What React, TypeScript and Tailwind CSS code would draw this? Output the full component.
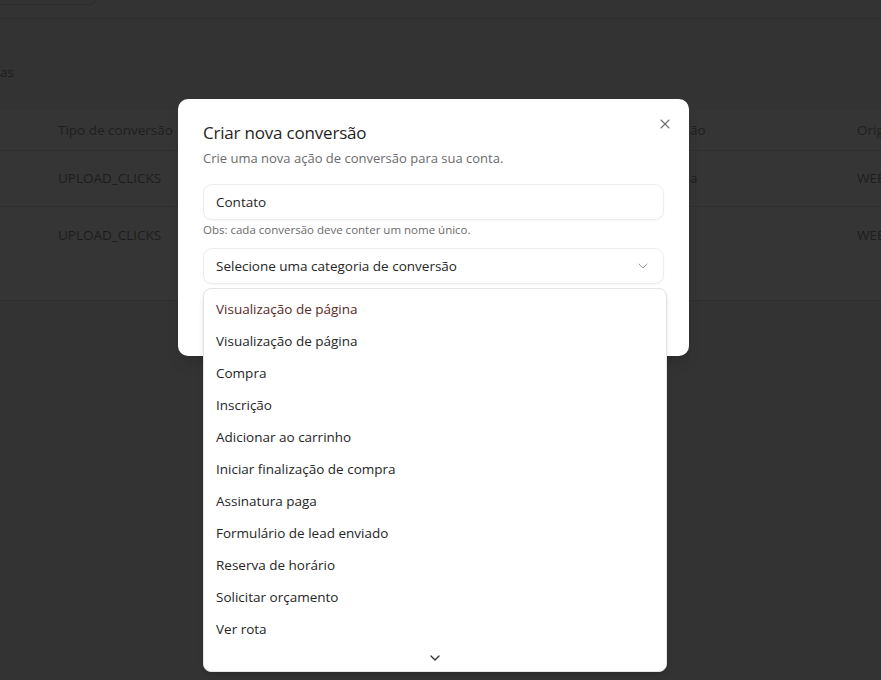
import { ChevronDown, X } from "lucide-react";

const OPTIONS = [
  "Visualização de página",
  "Visualização de página",
  "Compra",
  "Inscrição",
  "Adicionar ao carrinho",
  "Iniciar finalização de compra",
  "Assinatura paga",
  "Formulário de lead enviado",
  "Reserva de horário",
  "Solicitar orçamento",
  "Ver rota",
];

function BackgroundPage() {
  return (
    <div className="flex h-full flex-col">
      <div className="relative h-[19px] shrink-0 border-b border-[#2d2d2d]">
        <div className="absolute -left-4 -top-4 h-[21px] w-[113px] rounded-br-lg border-b border-r border-[#2d2d2d]" />
      </div>
      <p className="mt-[43px] h-5 text-[13.5px] leading-5 text-[#1d1d1d]">as</p>
      <div className="mt-[28px] h-[191px] border-b border-[#2f2f2f] bg-[#353535]">
        <div className="flex h-[41px] items-center border-b border-[#2f2f2f] pt-[1px] text-[13.5px] font-medium text-[#1f1f1f]">
          <span className="w-[620px] shrink-0 pl-[58px]">Tipo de conversão</span>
          <span className="w-[237px] shrink-0 pl-[70px]">ão</span>
          <span className="whitespace-nowrap">Origem</span>
        </div>
        {[0, 1].map((i) => (
          <div
            key={i}
            className={`flex h-[56px] items-center text-[13.5px] text-[#1d1d1d] ${
              i === 0 ? "border-b border-[#2f2f2f]" : ""
            }`}
          >
            <span className="w-[620px] shrink-0 pl-[58px]">UPLOAD_CLICKS</span>
            <span className="w-[237px] shrink-0 pl-[70px]">{i === 0 ? "a" : ""}</span>
            <span>WEB</span>
          </div>
        ))}
      </div>
    </div>
  );
}

export default function App() {
  return (
    <div
      className="relative h-[680px] w-[881px] overflow-hidden bg-[#333333]"
      style={{ fontFamily: '"Open Sans", "Noto Sans", sans-serif' }}
    >
      <BackgroundPage />

      <div className="absolute left-[178px] top-[99px] h-[257px] w-[511px] rounded-[10px] bg-white px-[25px] pt-[22px] shadow-lg">
        <button className="absolute right-[16px] top-[17px] text-[#6f6f6f]">
          <X className="h-4 w-4" strokeWidth={1.6} />
        </button>
        <h2 className="text-[17px] leading-6 font-medium tracking-[-0.2px] text-[#1f1f1f]">
          Criar nova conversão
        </h2>
        <p className="mt-[3px] text-[13px] leading-5 text-[#6b6b6b]">
          Crie uma nova ação de conversão para sua conta.
        </p>
        <div className="mt-4 flex h-9 items-center rounded-[9px] border border-[#ececec] px-[12px] text-[13.5px] text-[#262626] shadow-[0_1px_2px_rgba(0,0,0,0.04)]">
          Contato
        </div>
        <p className="mt-[2px] text-[11.5px] leading-4 text-[#6b6b6b]">
          Obs: cada conversão deve conter um nome único.
        </p>
        <div className="mt-[10px] flex h-9 items-center justify-between rounded-[9px] border border-[#ececec] pl-[12px] pr-[12px] text-[13.5px] text-[#262626] shadow-[0_1px_2px_rgba(0,0,0,0.04)]">
          <span>Selecione uma categoria de conversão</span>
          <ChevronDown className="h-4 w-4 text-[#9a9a9a]" strokeWidth={1.5} />
        </div>
      </div>

      <div className="absolute left-[203px] top-[288px] flex h-[384px] w-[464px] flex-col rounded-lg border border-[#e3e3e3] bg-white pt-[4px] shadow-md">
        {OPTIONS.map((o, i) => (
          <div
            key={i}
            className={`flex h-8 shrink-0 items-center px-3 text-[13.5px] ${
              i === 0 ? "text-[#5a2a1f]" : "text-[#262626]"
            }`}
          >
            {o}
          </div>
        ))}
        <div className="flex flex-1 items-center justify-center">
          <ChevronDown className="h-4 w-4 text-[#333333]" strokeWidth={2} />
        </div>
      </div>
    </div>
  );
}
